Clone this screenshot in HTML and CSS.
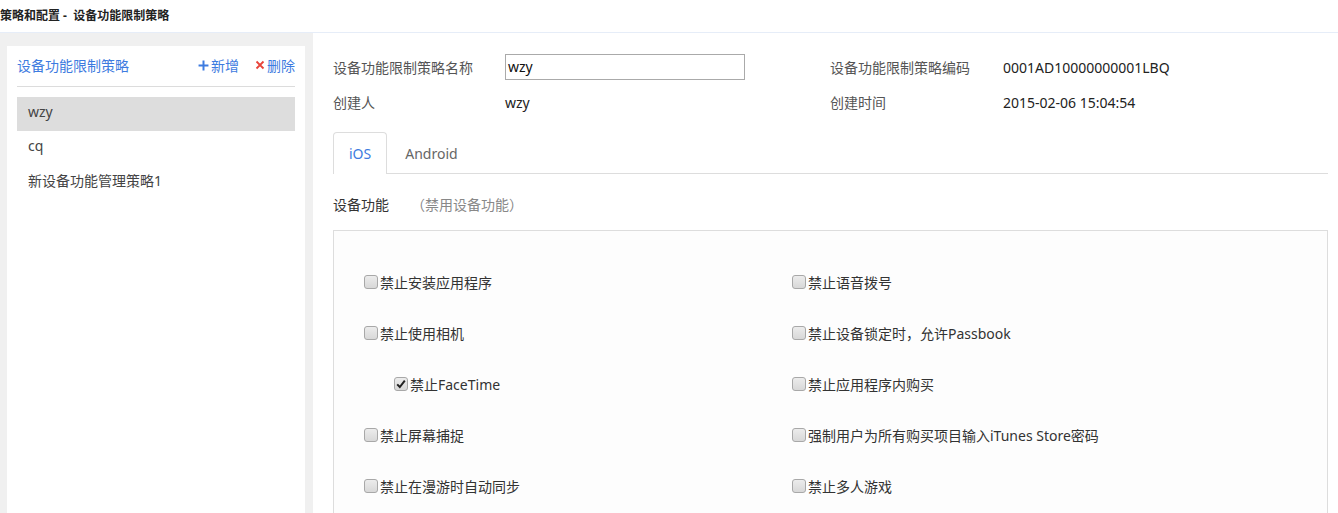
FILE: index.html
```html
<!DOCTYPE html>
<html lang="zh-CN">
<head>
<meta charset="utf-8">
<title>设备功能限制策略</title>
<link rel="stylesheet" href="styles.css">
</head>
<body>
<div class="topbar">策略和配置 -&nbsp; 设备功能限制策略</div>
<div class="layout">
  <aside class="sidebar">
    <div class="panel">
      <div class="panel-head">
        <span class="panel-title">设备功能限制策略</span>
        <span class="actions">
          <span class="act"><svg class="ico" viewBox="0 0 10 10" width="11" height="11"><path d="M5 0.5V9.5M0.5 5H9.5" stroke="#3d7be0" stroke-width="1.8"/></svg>新增</span>
          <span class="act"><svg class="ico" viewBox="0 0 10 10" width="10" height="10"><path d="M1.5 1.5L8.5 8.5M8.5 1.5L1.5 8.5" stroke="#e8443a" stroke-width="1.8"/></svg>删除</span>
        </span>
      </div>
      <ul class="list">
        <li class="item active">wzy</li>
        <li class="item">cq</li>
        <li class="item">新设备功能管理策略1</li>
      </ul>
    </div>
  </aside>
  <main class="main">
    <div class="info">
      <div class="info-row">
        <span class="lbl">设备功能限制策略名称</span>
        <span class="val"><span class="input">wzy</span></span>
        <span class="lbl lbl2">设备功能限制策略编码</span>
        <span class="val">0001AD10000000001LBQ</span>
      </div>
      <div class="info-row">
        <span class="lbl">创建人</span>
        <span class="val">wzy</span>
        <span class="lbl lbl2">创建时间</span>
        <span class="val">2015-02-06 15:04:54</span>
      </div>
    </div>
    <div class="tabs">
      <span class="tab active">iOS</span>
      <span class="tab">Android</span>
    </div>
    <div class="section-title">设备功能<span class="hint">（禁用设备功能）</span></div>
    <div class="box">
      <div class="grid">
        <label class="opt"><span class="cb"></span>禁止安装应用程序</label>
        <label class="opt"><span class="cb"></span>禁止语音拨号</label>
        <label class="opt"><span class="cb"></span>禁止使用相机</label>
        <label class="opt"><span class="cb"></span>禁止设备锁定时，允许Passbook</label>
        <label class="opt sub"><span class="cb checked"><svg viewBox="0 0 12 12" width="12" height="12"><path d="M2.2 6.4L4.8 9L9.8 2.6" fill="none" stroke="#222" stroke-width="2"/></svg></span>禁止FaceTime</label>
        <label class="opt"><span class="cb"></span>禁止应用程序内购买</label>
        <label class="opt"><span class="cb"></span>禁止屏幕捕捉</label>
        <label class="opt"><span class="cb"></span>强制用户为所有购买项目输入iTunes Store密码</label>
        <label class="opt"><span class="cb"></span>禁止在漫游时自动同步</label>
        <label class="opt"><span class="cb"></span>禁止多人游戏</label>
      </div>
    </div>
  </main>
</div>
</body>
</html>
```
FILE: styles.css
```css
* { box-sizing: border-box; }
html, body { margin: 0; padding: 0; }
body {
  font-family: "Noto Sans", "Noto Sans CJK SC", sans-serif;
  font-size: 14px;
  color: #333;
  background: #fff;
  overflow: hidden;
  height: 513px;
}
.topbar {
  height: 33px;
  line-height: 32px;
  font-size: 12px;
  font-weight: bold;
  color: #222;
  border-bottom: 1px solid #e6edf8;
  white-space: pre;
}
.layout {
  display: flex;
  height: 480px;
}
.sidebar {
  width: 313px;
  flex: none;
  background: #f0f0f0;
  padding: 13px 8px 0 7px;
}
.panel {
  background: #fff;
  height: 100%;
  padding: 0 10px;
}
.panel-head {
  display: flex;
  justify-content: space-between;
  align-items: center;
  height: 41px;
  padding-bottom: 2px;
  border-bottom: 1px solid #dcdcdc;
  color: #3d7be0;
  font-size: 14px;
}
.actions { display: flex; gap: 16px; }
.act { display: flex; align-items: center; gap: 2px; }
.ico { display: block; }
.list { list-style: none; margin: 10px 0 0; padding: 0; }
.item {
  height: 35px;
  line-height: 30px;
  padding: 0 11px 5px;
  color: #444;
}
.item.active { background: #dddddd; height: 34px; }
.main {
  flex: 1;
  padding: 0 10px 0 20px;
}
.info { padding-top: 20px; }
.info-row {
  display: grid;
  grid-template-columns: 172px 325px 173px 1fr;
  align-items: center;
  height: 28px;
}
.info-row:first-child { margin-bottom: 7px; }
.lbl { color: #555; }
.val { color: #222; }
.input {
  display: block;
  width: 240px;
  height: 26px;
  line-height: 24px;
  border: 1px solid #aaa;
  padding: 0 2px;
  color: #111;
}
.tabs {
  display: flex;
  margin-top: 16px;
  height: 42px;
  border-bottom: 1px solid #dddddd;
}
.tab {
  padding: 0 18px 0 17px;
  line-height: 41px;
  color: #666;
  border: 1px solid transparent;
  border-bottom: none;
}
.tab.active {
  color: #3d7be0;
  border-color: #dddddd;
  border-radius: 4px 4px 0 0;
  background: #fff;
  padding: 0 15px;
  margin-bottom: -1px;
  height: 42px;
}
.section-title {
  height: 56px;
  line-height: 62px;
  color: #333;
}
.hint { color: #888; margin-left: 22px; }
.box {
  border: 1px solid #dddddd;
  background: #fdfdfd;
  height: 400px;
  padding: 26px 0 0 30px;
}
.grid {
  display: grid;
  grid-template-columns: 428px 1fr;
  grid-auto-rows: 51px;
}
.opt {
  display: flex;
  align-items: center;
  height: 51px;
  color: #333;
  padding-bottom: 2px;
}
.opt.sub { padding-left: 30px; }
.cb {
  width: 14px;
  height: 14px;
  border: 1px solid #a8a8a8;
  border-radius: 3px;
  background: linear-gradient(#ececec, #d8d8d8);
  margin-right: 2px;
  display: flex;
  align-items: center;
  justify-content: center;
  flex: none;
}
.cb svg { display: block; }
```
